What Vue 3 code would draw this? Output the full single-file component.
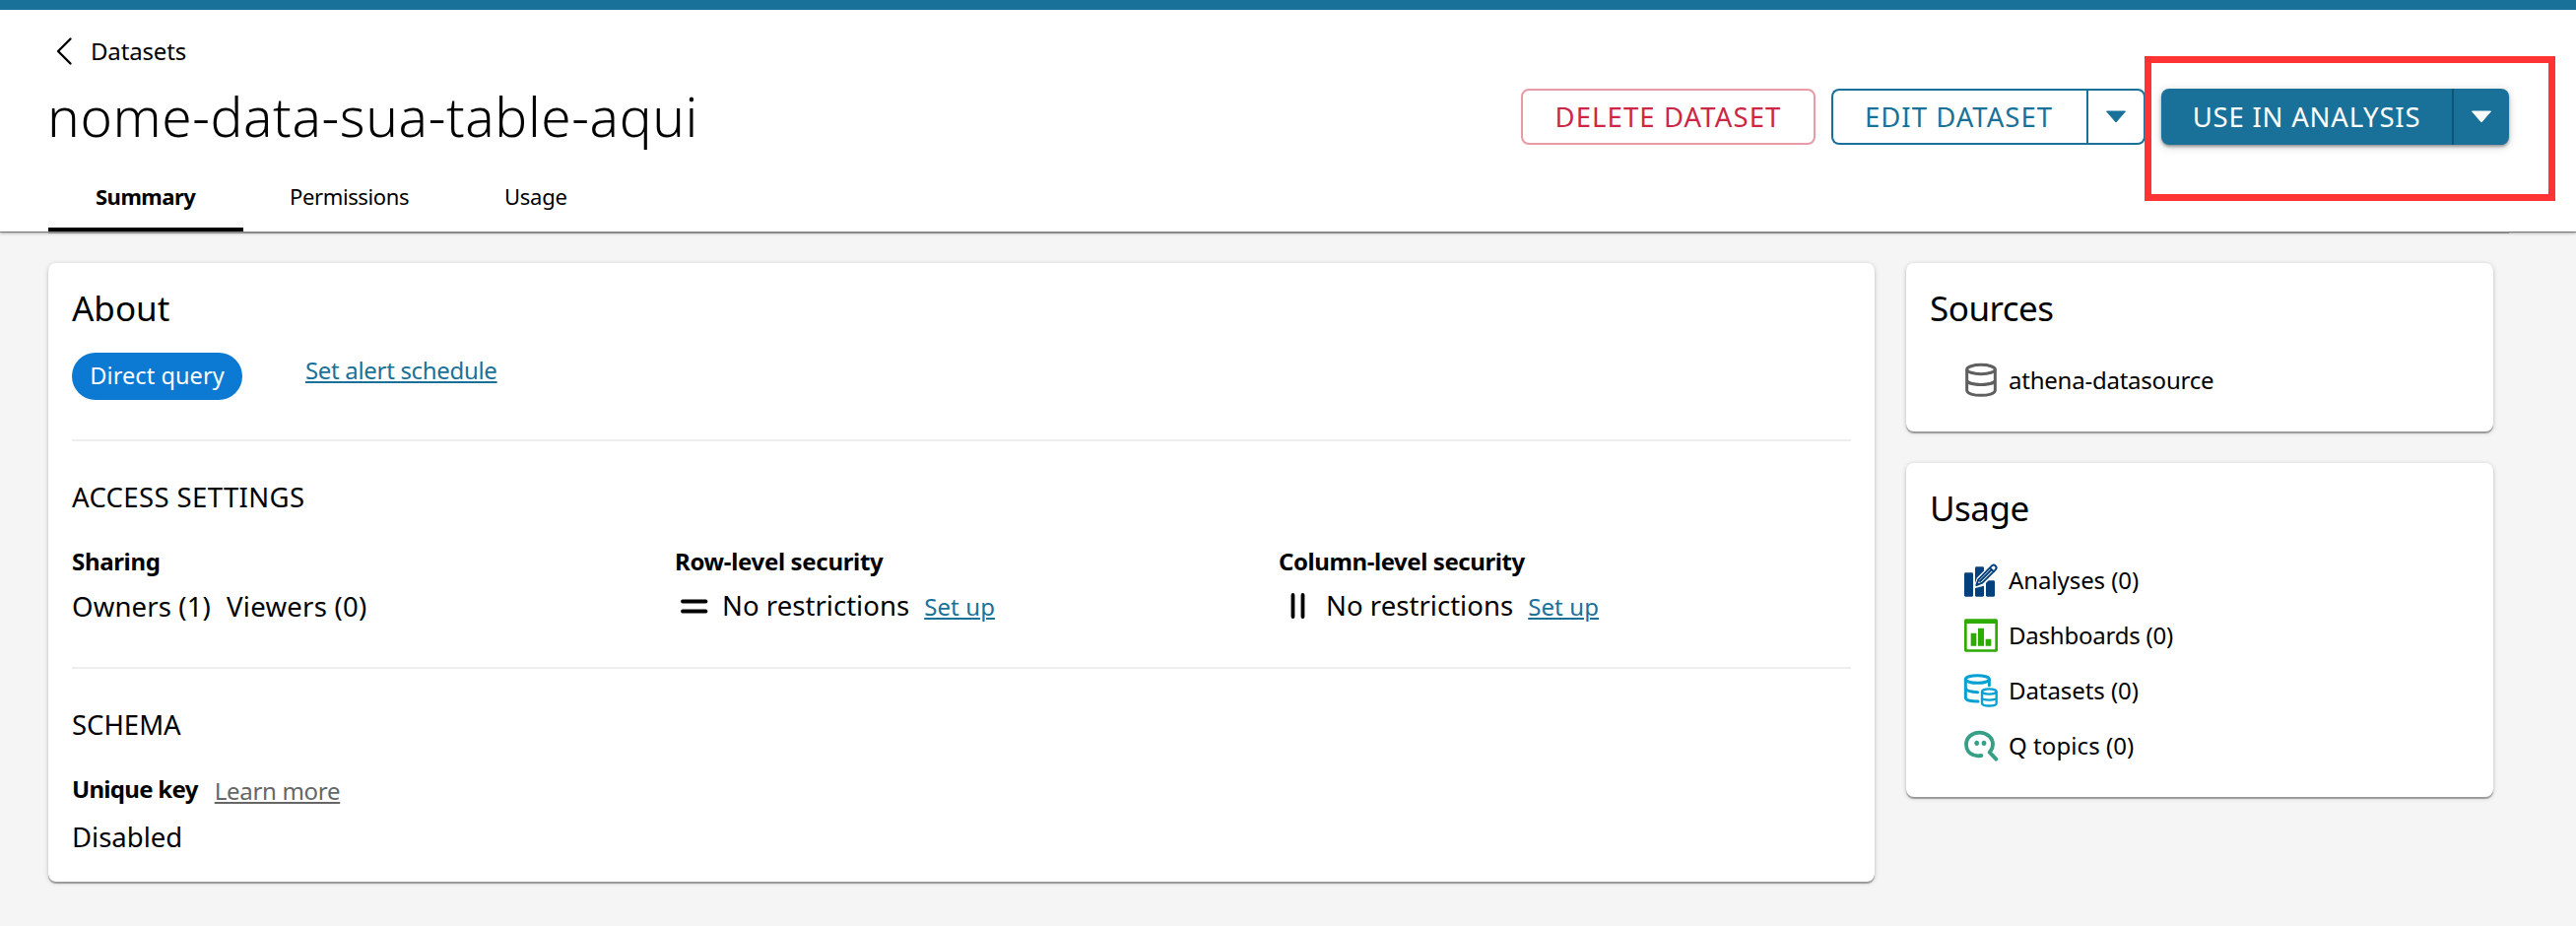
<script setup>
const tabs = [
  { label: 'Summary', key: 'summary' },
  { label: 'Permissions', key: 'permissions' },
  { label: 'Usage', key: 'usage' },
]
const activeTab = 'summary'
</script>

<template>
  <div class="page">
    <header class="header">
      <div class="crumb">
        <svg class="chevron" width="18" height="30" viewBox="0 0 18 30"><path d="M15.500 2.500 3 15 15.500 27.500" fill="none" stroke="#000" stroke-width="2.400" stroke-linecap="round" stroke-linejoin="round" /></svg>
        <span class="crumb-text">Datasets</span>
      </div>
      <div class="title-row">
        <h1 class="title">nome-data-sua-table-aqui</h1>
        <div class="actions">
          <button class="btn delete">DELETE DATASET</button>
          <div class="split edit">
            <button class="btn main">EDIT DATASET</button>
            <button class="btn caret"><svg width="22" height="13" viewBox="0 0 22 13"><path d="M1.500 1h19L11 12z" fill="currentColor" stroke="currentColor" stroke-linejoin="round" /></svg></button>
          </div>
          <div class="split use">
            <button class="btn main">USE IN ANALYSIS</button>
            <button class="btn caret"><svg width="22" height="13" viewBox="0 0 22 13"><path d="M1.500 1h19L11 12z" fill="currentColor" stroke="currentColor" stroke-linejoin="round" /></svg></button>
            <span class="highlight"></span>
          </div>
        </div>
      </div>
      <nav class="tabs">
        <a v-for="t in tabs" :key="t.key" class="tab" :class="[t.key, { active: t.key === activeTab }]">{{ t.label }}</a>
      </nav>
    </header>

    <main class="content">
      <section class="card about">
        <h2 class="heading about-heading">About</h2>
        <div class="status">
          <span class="pill">Direct query</span>
          <a class="link schedule">Set alert schedule</a>
        </div>
        <hr class="rule" />
        <h3 class="sub access">ACCESS SETTINGS</h3>
        <div class="grid">
          <div>
            <div class="label sharing">Sharing</div>
            <div class="value"><span class="owners">Owners (1)</span><span class="viewers">Viewers (0)</span></div>
          </div>
          <div>
            <div class="label">Row-level security</div>
            <div class="value">
              <svg class="limit-icon" width="48" height="36" viewBox="0 0 48 36"><path d="M8 12.500h23.500M8 22.500h23.500" stroke="#000" stroke-width="3.800" stroke-linecap="round" /></svg>
              <span class="restrict">No restrictions</span><a class="link setup">Set up</a>
            </div>
          </div>
          <div>
            <div class="label column">Column-level security</div>
            <div class="value">
              <svg class="limit-icon" width="48" height="36" viewBox="0 0 48 36"><path d="M14.500 6v22M24.500 6v22" stroke="#000" stroke-width="3.800" stroke-linecap="round" /></svg>
              <span class="restrict">No restrictions</span><a class="link setup">Set up</a>
            </div>
          </div>
        </div>
        <hr class="rule second" />
        <h3 class="sub">SCHEMA</h3>
        <div class="key-row">
          <span class="label unique">Unique key</span><a class="link learn">Learn more</a>
        </div>
        <div class="value disabled">Disabled</div>
      </section>

      <aside class="side">
        <section class="card small">
          <h2 class="heading sources">Sources</h2>
          <ul class="list">
            <li>
              <svg class="icon" viewBox="0 0 102 102" fill="none" stroke="#5f5f5f" stroke-width="9">
                <ellipse cx="51" cy="18" rx="43" ry="14" />
                <path d="M8 18v64c0 20 86 20 86 0V18M8 50c0 19 86 19 86 0" />
              </svg>
              <span class="athena">athena-datasource</span>
            </li>
          </ul>
        </section>

        <section class="card small">
          <h2 class="heading usage-heading">Usage</h2>
          <ul class="list">
            <li>
              <svg class="icon" viewBox="0 0 102 102">
                <g fill="#04407b">
                  <rect x="0" y="28" width="27" height="73" rx="4" />
                  <rect x="33" y="10" width="27" height="91" rx="4" />
                  <rect x="66" y="52" width="27" height="49" rx="4" />
                </g>
                <path d="M36 66 43 46 82 7 98 20 57 62z" fill="#fff" stroke="#fff" stroke-width="10" stroke-linejoin="round" />
                <path d="M30 73 65 64" stroke="#fff" stroke-width="5" />
                <path d="M37 66 43 49 83 8q6-7 12-1t0 12L55 59zM78 13l12 12M48 54 81 21" fill="none" stroke="#04407b" stroke-width="6" stroke-linejoin="round" stroke-linecap="round" />
              </svg>
              <span>Analyses (0)</span>
            </li>
            <li>
              <svg class="icon" viewBox="0 0 102 102" fill="#2cab00">
                <path fill-rule="evenodd" d="M5 1h92q5 0 5 5v90q0 5-5 5H5q-5 0-5-5V6q0-5 5-5zM8 15v79h86V15z" />
                <path d="M20 44h17v39H20zM42 29h18v54H42zM65 62h17v21H65z" />
              </svg>
              <span class="dash">Dashboards (0)</span>
            </li>
            <li>
              <svg class="icon" viewBox="0 0 102 102" fill="none" stroke="#05a1d2" stroke-width="9">
                <ellipse cx="40" cy="16.500" rx="36" ry="11.500" />
                <path d="M4 17v57q2 10 38 10M5 46q3 9 36 10M76 17v18" stroke-linecap="round" />
                <g stroke-width="7">
                  <ellipse cx="76" cy="54" rx="22" ry="8" />
                  <path d="M54 54v36c0 10 44 10 44 0V54M54 73c0 9 44 9 44 0" />
                </g>
              </svg>
              <span>Datasets (0)</span>
            </li>
            <li>
              <svg class="icon" viewBox="0 0 102 102" fill="none" stroke="#369f86" stroke-width="11.500" stroke-linecap="round">
                <path d="M52 81C24 86 6 70 6 47C6 26 24 11 46 11s41 15 41 36q0 14-10 24L97 92" stroke-linejoin="round" />
                <g fill="#369f86" stroke="none"><ellipse cx="38" cy="43" rx="7" ry="8" /><ellipse cx="60" cy="43" rx="7" ry="8" /></g>
              </svg>
              <span class="topics">Q topics (0)</span>
            </li>
          </ul>
        </section>
      </aside>
    </main>
  </div>
</template>

<style>
body {
  background: #f5f5f5;
}
</style>

<style scoped>
.page {
  box-sizing: border-box;
  width: 2615px;
  height: 940px;
  overflow: hidden;
  background: #f5f5f5;
  color: #000;
  font-family: "Noto Sans", "Open Sans", sans-serif;
  font-size: 24px;
}
.page * { box-sizing: border-box; }
h1, h2, h3, ul { margin: 0; padding: 0; font-weight: 400; }
.header {
  display: flex;
  flex-direction: column;
  height: 235px;
  padding: 26px 68px 0 49px;
  border-top: 10px solid #19719a;
  background: #fff;
  box-shadow: 0 1px 1px rgba(0, 0, 0, .36), 0 2px 3px rgba(0, 0, 0, .26);
}
.crumb {
  display: flex;
  align-items: center;
  height: 32px;
  padding-left: 7px;
}
.chevron { margin-right: 18px; }
.crumb-text { line-height: 32px; letter-spacing: -.15px; }
.title-row {
  display: flex;
  justify-content: space-between;
  margin-top: 18px;
  height: 64px;
}
.title {
  font-size: 55px;
  font-weight: 300;
  line-height: 64px;
  letter-spacing: .6px;
  margin-left: -1px;
  white-space: nowrap;
}
.actions { display: flex; gap: 16px; padding-top: 4px; }
.btn {
  display: flex;
  align-items: center;
  justify-content: center;
  height: 57px;
  padding: 0;
  border: 0;
  background: none;
  color: inherit;
  font: 27.5px/53px "Noto Sans", sans-serif;
  letter-spacing: 1.1px;
  white-space: nowrap;
}
.delete {
  width: 299px;
  border: 2px solid #e89aa6;
  border-radius: 8px;
  color: #cb2845;
}
.split { position: relative; display: flex; height: 57px; }
.edit { color: #19719a; width: 319px; }
.edit .main { width: 259px; padding-right: 2px; border: 2px solid #19719a; border-right: 0; border-radius: 8px 0 0 8px; letter-spacing: 1.02px; }
.edit .caret { width: 60px; border: 2px solid #19719a; border-radius: 0 8px 8px 0; }
.use {
  width: 353px;
  border-radius: 8px;
  background: #19719a;
  color: #fff;
  box-shadow: 0 2px 3px rgba(0, 0, 0, .34), 0 2px 10px rgba(0, 0, 0, .18);
}
.use .main { width: 297px; border-right: 2px solid #105273; letter-spacing: .8px; }
.use .caret { width: 56px; }
.highlight {
  position: absolute;
  left: -17px;
  top: -33px;
  width: 417px;
  height: 147px;
  border: 7px solid #f33;
}
.tabs {
  display: flex;
  flex: 1;
  border-bottom: 2px solid #8a8a8a;
}
.tab {
  width: 198px;
  height: 85px;
  padding: 33px 0 0 48px;
  font-size: 22px;
  line-height: 32px;
}
.tab.permissions { width: 217px; padding-left: 47px; letter-spacing: -.37px; }
.tab.usage { letter-spacing: -.25px; }
.tab.active { font-weight: 700; letter-spacing: -.5px; border-bottom: 4px solid #000; }
.content {
  display: flex;
  align-items: flex-start;
  gap: 32px;
  padding: 32px 84px 0 49px;
}
.card {
  border-radius: 8px;
  background: #fff;
  box-shadow: 0 2px 1px rgba(0, 0, 0, .3), 0 1px 5px rgba(0, 0, 0, .2);
}
.about { width: 1854px; height: 628px; padding: 22px 24px 0; }
.heading { font-size: 35px; line-height: 48px; }
.status { display: flex; margin-top: 21px; height: 48px; }
.pill {
  width: 173px;
  height: 48px;
  border-radius: 24px;
  background: #0c79d3;
  color: #fff;
  font-size: 23.5px;
  line-height: 46px;
  text-align: center;
  letter-spacing: .08px;
}
.link {
  color: #19719a;
  line-height: 32px;
  text-decoration: underline;
  text-decoration-thickness: 2px;
  text-underline-offset: 2px;
}
.schedule { margin: 2px 0 0 64px; letter-spacing: -.32px; }
.rule {
  height: 2px;
  margin: 40px 0 0;
  border: 0;
  background: #eee;
}
.sub { margin-top: 39px; font-size: 27.5px; line-height: 36px; }
.access { letter-spacing: .38px; }
.grid {
  display: grid;
  grid-template-columns: 612px 613px 1fr;
  margin-top: 31px;
}
.label { font-weight: 700; line-height: 32px; letter-spacing: -.33px; }
.label.column { letter-spacing: -.42px; }
.value { display: flex; height: 36px; margin-top: 12px; font-size: 27.5px; line-height: 36px; letter-spacing: .15px; }
.viewers { margin-left: 16px; letter-spacing: .27px; }
.limit-icon { flex: none; }
.restrict { margin-top: -1px; letter-spacing: .04px; }
.setup { margin: 2px 0 0 15px; font-size: 24px; line-height: 32px; letter-spacing: .1px; }
.second { margin-top: 43px; }
.key-row { display: flex; height: 32px; margin-top: 31px; }
.unique { letter-spacing: -.7px; }
.learn { margin: 2px 0 0 17px; color: #666; letter-spacing: -.3px; }
.disabled { margin-top: 15px; letter-spacing: 0; }
.side { width: 596px; display: grid; gap: 32px; }
.small { padding: 22px 24px 24px; }
.sources { letter-spacing: -.5px; }
.usage-heading { letter-spacing: -.5px; }
.list { margin-top: 21px; list-style: none; }
.list li {
  display: flex;
  align-items: center;
  height: 56px;
  padding-left: 35px;
  line-height: 32px;
  letter-spacing: -.07px;
}
.icon { width: 34px; height: 34px; margin-right: 11px; overflow: visible; }
.athena { letter-spacing: -.23px; }
.dash { letter-spacing: -.23px; }
.topics { letter-spacing: .07px; }
</style>
